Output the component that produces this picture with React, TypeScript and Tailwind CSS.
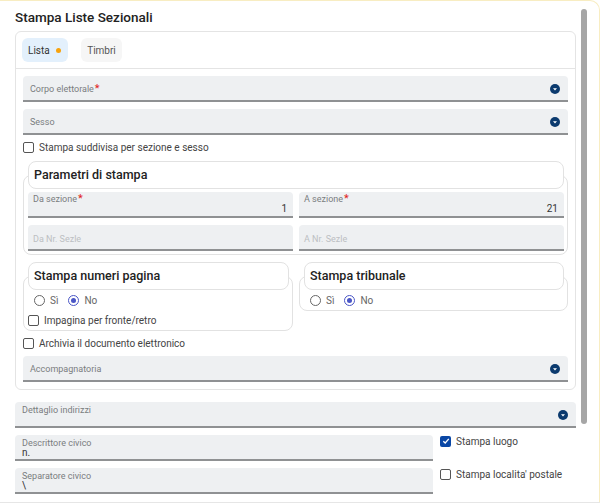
import React from "react";

function Chevron() {
  return (
    <svg width="10" height="10" viewBox="0 0 10 10">
      <circle cx="5" cy="5" r="5" fill="#0b3a6e" />
      <path d="M3 4.2 L7 4.2 L5 6.4 Z" fill="#fff" />
    </svg>
  );
}

function Field({
  label,
  required,
  value,
  select,
  placeholder,
  top,
  className = "",
}: {
  label: string;
  required?: boolean;
  value?: string;
  select?: boolean;
  placeholder?: boolean;
  top?: boolean;
  className?: string;
}) {
  return (
    <div className={"relative h-[26px] rounded-t-[4px] bg-[#eef0f2] border-b-2 border-[#8f9193] " + className}>
      <div
        className={
          "absolute left-[7px] text-[9px] leading-[10px] " +
          (top || value ? "top-[3px] " : "top-[8px] ") +
          (placeholder ? "text-[#b9bcbf]" : "text-[#7a7d80]")
        }
      >
        {label}
        {required && <span className="text-[#e02020] ml-[1px] text-[11px]">*</span>}
      </div>
      {value !== undefined && (
        <div className="absolute left-[7px] right-[5px] top-[12px] text-[10px] leading-[12px] text-[#333]">{value}</div>
      )}
      {select && (
        <div className="absolute right-[8px] top-[8px]">
          <Chevron />
        </div>
      )}
    </div>
  );
}

function NumField({ label, value, required, placeholder }: { label: string; value?: string; required?: boolean; placeholder?: boolean }) {
  return (
    <div className="relative h-[26px] rounded-t-[4px] bg-[#eef0f2] border-b-2 border-[#8f9193]">
      <div className={"absolute left-[5px] text-[9px] leading-[10px] " + (placeholder ? "top-[9px] text-[#bcbfc2]" : "top-[2px] text-[#7a7d80]")}>
        {label}
        {required && <span className="text-[#e02020] ml-[1px] text-[11px]">*</span>}
      </div>
      {value && <div className="absolute right-[6px] top-[11px] text-[10px] leading-[12px] text-[#333]">{value}</div>}
    </div>
  );
}

function Check({ label, checked }: { label: string; checked?: boolean }) {
  return (
    <div className="flex items-center gap-[5px] h-[14px]">
      {checked ? (
        <div className="w-[11px] h-[11px] rounded-[2px] bg-[#0a47a5] flex items-center justify-center">
          <svg width="8" height="8" viewBox="0 0 8 8">
            <path d="M1.3 4.2 L3.2 6 L6.8 1.8" stroke="#fff" strokeWidth="1.3" fill="none" />
          </svg>
        </div>
      ) : (
        <div className="w-[11px] h-[11px] rounded-[2px] border-[1.5px] border-[#555]" />
      )}
      <span className="text-[10px] text-[#444]">{label}</span>
    </div>
  );
}

function Radio({ label, checked }: { label: string; checked?: boolean }) {
  return (
    <div className="flex items-center gap-[5px]">
      {checked ? (
        <div className="w-[11px] h-[11px] rounded-full border-[1.5px] border-[#4a56c6] flex items-center justify-center">
          <div className="w-[5px] h-[5px] rounded-full bg-[#4a56c6]" />
        </div>
      ) : (
        <div className="w-[11px] h-[11px] rounded-full border-[1.5px] border-[#666]" />
      )}
      <span className="text-[10px] text-[#666]">{label}</span>
    </div>
  );
}

function GroupTitle({ title }: { title: string }) {
  return (
    <div className="-mt-[15px] h-[28px] bg-white border border-[#e2e2e2] rounded-lg flex items-center px-[5px] text-[12.5px] font-medium text-[#222]">
      {title}
    </div>
  );
}

export default function App() {
  return (
    <div className="w-[600px] h-[504px] overflow-hidden bg-white relative" style={{ fontFamily: "Roboto, 'Liberation Sans', sans-serif" }}>
      <div className="h-[502px] border-t border-r border-[#f8edc2] rounded-tr-[10px] border-b-0">
        <div className="pl-[15px] w-[576px]">
          <div className="pt-[7px] h-[30px] text-[13.5px] font-medium text-[#222] leading-[18px]">Stampa Liste Sezionali</div>

          {/* card */}
          <div className="border border-[#e4e4e4] rounded-md">
            <div className="flex gap-[13px] px-[6px] pt-[6px] h-[37px] border-b border-[#e4e4e4]">
              <div className="h-[24px] w-[46px] rounded-md bg-[#e3f0fc] flex items-center pl-[6px] gap-[6px] text-[10px] text-[#333]">
                Lista
                <span className="w-[5px] h-[5px] rounded-full bg-[#f7a20c]" />
              </div>
              <div className="h-[24px] w-[41px] rounded-md bg-[#f6f6f6] flex items-center justify-center text-[10px] text-[#555]">Timbri</div>
            </div>

            <div className="px-[7px] pt-[7px] pb-[7px]">
              <Field label="Corpo elettorale" required select />
              <Field label="Sesso" select className="mt-[7px]" />
              <div className="mt-[5px]">
                <Check label="Stampa suddivisa per sezione e sesso" />
              </div>

              {/* Parametri di stampa */}
              <div className="mt-[21px] border border-[#e2e2e2] rounded-lg pl-[4px] pr-[3px] pb-[3px]">
                <GroupTitle title="Parametri di stampa" />
                <div className="grid grid-cols-2 gap-x-[6px] gap-y-[7px] mt-[3px]">
                  <NumField label="Da sezione" required value="1" />
                  <NumField label="A sezione" required value="21" />
                  <NumField label="Da Nr. Sezle" placeholder />
                  <NumField label="A Nr. Sezle" placeholder />
                </div>
              </div>

              <div className="flex gap-[6px] mt-[21px] items-start">
                <div className="w-[270px] border border-[#e2e2e2] rounded-lg pl-[4px] pr-[3px] pb-[3px]">
                  <GroupTitle title="Stampa numeri pagina" />
                  <div className="flex gap-[10px] pl-[6px] mt-[4px] h-[12px] items-center">
                    <Radio label="Sì" />
                    <Radio label="No" checked />
                  </div>
                  <div className="mt-[7px]">
                    <Check label="Impagina per fronte/retro" />
                  </div>
                </div>
                <div className="flex-1 border border-[#e2e2e2] rounded-lg pl-[4px] pr-[3px] pb-[4px]">
                  <GroupTitle title="Stampa tribunale" />
                  <div className="flex gap-[10px] pl-[6px] mt-[4px] h-[12px] items-center">
                    <Radio label="Sì" />
                    <Radio label="No" checked />
                  </div>
                </div>
              </div>

              <div className="mt-[5px]">
                <Check label="Archivia il documento elettronico" />
              </div>
              <Field label="Accompagnatoria" select className="mt-[6px]" />
            </div>
          </div>

          <Field label="Dettaglio indirizzi" select top className="mt-[12px]" />
          <div className="flex mt-[7px]">
            <div className="w-[418px] flex flex-col gap-[7px]">
              <Field label="Descrittore civico" value="n." />
              <Field label="Separatore civico" value="\" />
            </div>
            <div className="flex flex-col pl-[7px]">
              <div className="mt-[-1px]">
                <Check label="Stampa luogo" checked />
              </div>
              <div className="mt-[19px]">
                <Check label="Stampa localita' postale" />
              </div>
            </div>
          </div>
        </div>
      </div>
      <div className="h-[1px] bg-[#e6e6e6]" />
      <div className="absolute left-[581px] top-[9px] w-[6px] h-[415px] rounded-full bg-[#a6a6a6]" />
    </div>
  );
}
